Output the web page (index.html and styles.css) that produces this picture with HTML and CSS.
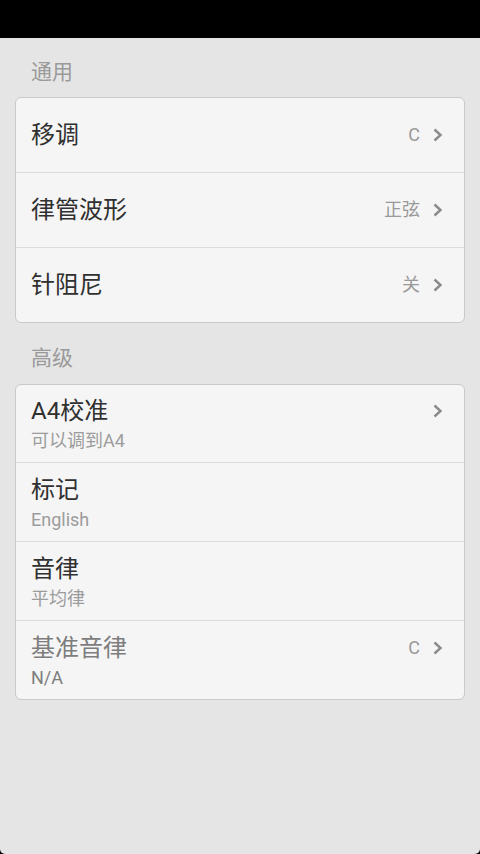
FILE: index.html
```html
<!DOCTYPE html>
<html lang="zh-CN">
<head>
<meta charset="utf-8">
<title>设置</title>
<link rel="stylesheet" href="styles.css">
</head>
<body>
<div class="topbar"></div>
<main class="sheet">
  <div class="section-title first">通用</div>
  <section class="card">
    <div class="row single">
      <span class="title">移调</span>
      <span class="value">C</span>
      <svg class="chev" viewBox="0 0 10 14" width="10" height="14"><polyline points="1.5,1.5 7.5,7 1.5,12.5"/></svg>
    </div>
    <div class="row single">
      <span class="title">律管波形</span>
      <span class="value">正弦</span>
      <svg class="chev" viewBox="0 0 10 14" width="10" height="14"><polyline points="1.5,1.5 7.5,7 1.5,12.5"/></svg>
    </div>
    <div class="row single">
      <span class="title">针阻尼</span>
      <span class="value">关</span>
      <svg class="chev" viewBox="0 0 10 14" width="10" height="14"><polyline points="1.5,1.5 7.5,7 1.5,12.5"/></svg>
    </div>
  </section>

  <div class="section-title">高级</div>
  <section class="card">
    <div class="row double">
      <div class="texts">
        <div class="title">A4校准</div>
        <div class="sub">可以调到A4</div>
      </div>
      <svg class="chev" viewBox="0 0 10 14" width="10" height="14"><polyline points="1.5,1.5 7.5,7 1.5,12.5"/></svg>
    </div>
    <div class="row double">
      <div class="texts">
        <div class="title">标记</div>
        <div class="sub">English</div>
      </div>
    </div>
    <div class="row double">
      <div class="texts">
        <div class="title">音律</div>
        <div class="sub">平均律</div>
      </div>
    </div>
    <div class="row double disabled">
      <div class="texts">
        <div class="title">基准音律</div>
        <div class="sub">N/A</div>
      </div>
      <span class="value">C</span>
      <svg class="chev" viewBox="0 0 10 14" width="10" height="14"><polyline points="1.5,1.5 7.5,7 1.5,12.5"/></svg>
    </div>
  </section>
</main>
</body>
</html>
```

FILE: styles.css
```css
html, body {
  margin: 0;
  padding: 0;
  background: #000;
  height: 854px;
  overflow: hidden;
}

body {
  display: flex;
  flex-direction: column;
  font-family: "Roboto", "Noto Sans CJK SC", sans-serif;
}

.topbar {
  height: 38px;
  flex: 0 0 38px;
  background: #000;
}

.sheet {
  flex: 1;
  background: #e5e5e5;
  border-radius: 0 0 5px 5px;
  padding: 0 15px;
  display: flex;
  flex-direction: column;
}

.section-title {
  font-size: 21px;
  line-height: 30px;
  color: #9a9a9a;
  padding-left: 16px;
  margin-top: 20px;
  margin-bottom: 11px;
}

.section-title.first {
  margin-top: 19px;
  margin-bottom: 10px;
}

.card {
  background: #f5f5f5;
  border: 1px solid #c9c9c9;
  border-radius: 6px;
  display: flex;
  flex-direction: column;
}

.row {
  display: flex;
  align-items: center;
  padding: 0 21px 0 15px;
  border-top: 1px solid #dcdcdc;
}

.row:first-child {
  border-top: none;
}

.row.single {
  height: 74px;
}

.row.double {
  height: 79px;
  align-items: flex-start;
  box-sizing: border-box;
  padding-top: 12px;
}

.row.double:first-child {
  height: 77px;
  padding-top: 11px;
}

.title {
  font-size: 24px;
  line-height: 30px;
  color: #303030;
}

.single .title {
  flex: 1;
}

.texts {
  flex: 1;
  display: flex;
  flex-direction: column;
}

.sub {
  font-size: 18px;
  line-height: 22px;
  margin-top: 4px;
  color: #9c9c9c;
}

.value {
  font-size: 18px;
  line-height: 30px;
  color: #999;
  margin-right: 13px;
}

.chev {
  flex: 0 0 auto;
}

.double .chev {
  margin-top: 8px;
}

.chev polyline {
  fill: none;
  stroke: #8a8a8a;
  stroke-width: 2.4;
  stroke-linecap: butt;
  stroke-linejoin: miter;
}

.disabled .title {
  color: #7d7d7d;
}

.disabled .sub {
  color: #7d7d7d;
}
```
